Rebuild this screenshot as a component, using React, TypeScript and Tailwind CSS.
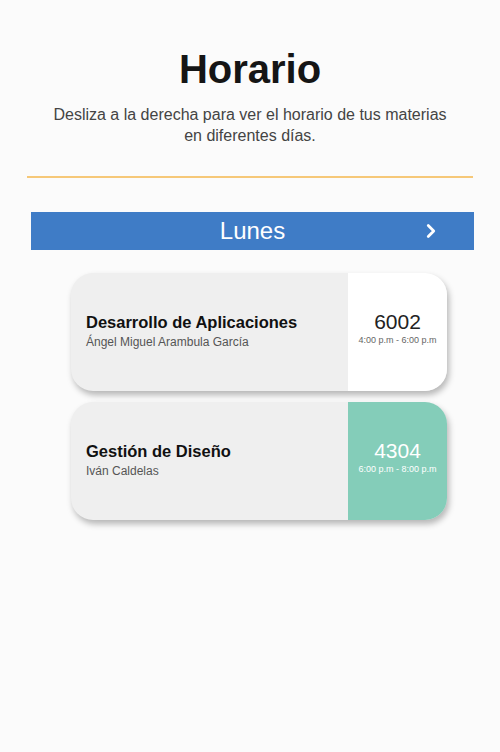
import { ChevronRight } from 'lucide-react'

const CLASSES = [
  {
    name: 'Desarrollo de Aplicaciones',
    teacher: 'Ángel Miguel Arambula García',
    room: '6002',
    time: '4:00 p.m - 6:00 p.m',
    active: false,
  },
  {
    name: 'Gestión de Diseño',
    teacher: 'Iván Caldelas',
    room: '4304',
    time: '6:00 p.m - 8:00 p.m',
    active: true,
  },
]

const ClassCard = ({ item }: { item: (typeof CLASSES)[number] }) => (
  <div className="flex h-[118px] w-[376px] overflow-hidden rounded-[22px] bg-[#efefef] shadow-[2px_4px_6px_rgba(0,0,0,0.28)]">
    <div className="flex flex-1 flex-col justify-center pl-[15px] pb-[2px]">
      <p className="text-[16.5px] font-bold leading-[20px] text-[#111]">{item.name}</p>
      <p className="mt-[2px] text-[12px] leading-[16px] text-[#555]">{item.teacher}</p>
    </div>
    <div
      className={
        item.active
          ? 'flex w-[99px] flex-col items-center justify-center pb-[8px] bg-[#84cdb9] text-white'
          : 'flex w-[99px] flex-col items-center justify-center pb-[8px] bg-white text-[#222]'
      }
    >
      <p className="text-[21px] font-light leading-[24px]">{item.room}</p>
      <p
        className={
          item.active
            ? 'text-[9px] leading-[12px] text-white'
            : 'text-[9px] leading-[12px] text-[#666]'
        }
      >
        {item.time}
      </p>
    </div>
  </div>
)

export default function App() {
  return (
    <main className="min-h-[752px] w-[500px] bg-[#fbfbfb] font-['Liberation_Sans',Arial,sans-serif]">
      <div className="flex flex-col items-center pt-[45px]">
        <h1 className="text-[40px] font-bold leading-[48px] text-[#151515]">Horario</h1>
        <p className="mt-[11px] w-[404px] text-center text-[16px] leading-[21px] text-[#444]">
          Desliza a la derecha para ver el horario de tus materias en diferentes días.
        </p>
      </div>

      <div className="mx-[27px] mt-[30px] h-[2px] bg-[#f6c878]" />

      <div className="relative ml-[31px] mt-[34px] flex h-[38px] w-[443px] items-center justify-center bg-[#3f7cc6]">
        <span className="text-[24px] font-light text-white">Lunes</span>
        <ChevronRight className="absolute right-[32px] h-[22px] w-[22px] text-white" strokeWidth={3} />
      </div>

      <div className="ml-[71px] mt-[23px] flex flex-col gap-[11px]">
        {CLASSES.map((item) => (
          <ClassCard key={item.room} item={item} />
        ))}
      </div>
    </main>
  )
}
